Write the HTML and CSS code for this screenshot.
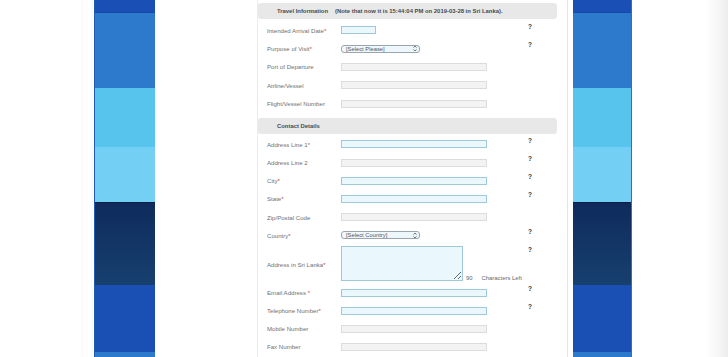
FILE: index.html
```html
<!DOCTYPE html>
<html lang="en">
<head>
<meta charset="utf-8">
<title>Travel Information</title>
<link rel="stylesheet" href="styles.css">
</head>
<body>
<div class="page">
  <div class="gutter-left"></div>
  <div class="stripe stripe-left">
    <div class="band b1"></div><div class="band b2"></div><div class="band b3"></div><div class="band b4"></div><div class="band b5"></div><div class="band b6"></div><div class="band b7"></div>
  </div>
  <div class="gap-mid"></div>
  <main class="panel">
    <section class="section">
      <div class="section-head"><span class="title">Travel Information</span><span class="note">(Note that now it is 15:44:04 PM on 2019-03-28 in Sri Lanka).</span></div>
      <div class="row"><label class="lbl">Intended Arrival Date<span class="req">*</span></label><div class="field"><input class="inp need w-date" type="text"></div><span class="help">?</span></div>
      <div class="row"><label class="lbl">Purpose of Visit<span class="req">*</span></label><div class="field"><div class="sel w-sel1"><span>[Select Please]</span><svg class="arr" viewBox="0 0 4 7" width="4" height="7"><path d="M0.5 2.6 L2 1 L3.5 2.6 M0.5 4.4 L2 6 L3.5 4.4" fill="none" stroke="#555" stroke-width="0.8"/></svg></div></div><span class="help">?</span></div>
      <div class="row"><label class="lbl">Port of Departure</label><div class="field"><input class="inp opt w-full" type="text"></div><span class="help"></span></div>
      <div class="row"><label class="lbl">Airline/Vessel</label><div class="field"><input class="inp opt w-full" type="text"></div><span class="help"></span></div>
      <div class="row"><label class="lbl">Flight/Vessel Number</label><div class="field"><input class="inp opt w-full" type="text"></div><span class="help"></span></div>
    </section>
    <section class="section">
      <div class="section-head"><span class="title">Contact Details</span></div>
      <div class="row"><label class="lbl">Address Line 1<span class="req">*</span></label><div class="field"><input class="inp need w-full" type="text"></div><span class="help">?</span></div>
      <div class="row"><label class="lbl">Address Line 2</label><div class="field"><input class="inp opt w-full" type="text"></div><span class="help">?</span></div>
      <div class="row"><label class="lbl">City<span class="req">*</span></label><div class="field"><input class="inp need w-full" type="text"></div><span class="help">?</span></div>
      <div class="row"><label class="lbl">State<span class="req">*</span></label><div class="field"><input class="inp need w-full" type="text"></div><span class="help">?</span></div>
      <div class="row"><label class="lbl">Zip/Postal Code</label><div class="field"><input class="inp opt w-full" type="text"></div><span class="help"></span></div>
      <div class="row"><label class="lbl">Country<span class="req">*</span></label><div class="field"><div class="sel w-sel1"><span>[Select Country]</span><svg class="arr" viewBox="0 0 4 7" width="4" height="7"><path d="M0.5 2.6 L2 1 L3.5 2.6 M0.5 4.4 L2 6 L3.5 4.4" fill="none" stroke="#555" stroke-width="0.8"/></svg></div></div><span class="help">?</span></div>
      <div class="row row-tall"><label class="lbl">Address in Sri Lanka<span class="req">*</span></label><div class="field field-ta"><textarea class="ta"></textarea><span class="count">90</span><span class="left">Characters Left</span></div><span class="help">?</span></div>
      <div class="row"><label class="lbl">Email Address <span class="req">*</span></label><div class="field"><input class="inp need w-full" type="text"></div><span class="help">?</span></div>
      <div class="row"><label class="lbl">Telephone Number<span class="req">*</span></label><div class="field"><input class="inp need w-full" type="text"></div><span class="help">?</span></div>
      <div class="row"><label class="lbl">Mobile Number</label><div class="field"><input class="inp opt w-full" type="text"></div><span class="help"></span></div>
      <div class="row"><label class="lbl">Fax Number</label><div class="field"><input class="inp opt w-full" type="text"></div><span class="help"></span></div>
    </section>
  </main>
  <div class="gap-right"></div>
  <div class="stripe stripe-right">
    <div class="band b1"></div><div class="band b2"></div><div class="band b3"></div><div class="band b4"></div><div class="band b5"></div><div class="band b6"></div><div class="band b7"></div>
  </div>
  <div class="gutter-right"></div>
</div>
</body>
</html>
```
FILE: styles.css
```css
* { box-sizing: border-box; }
html, body { margin: 0; padding: 0; background: #fff; }
body { font-family: "Liberation Sans", Arial, sans-serif; color: #666; }

.page { display: flex; height: 357px; overflow: hidden; }

.gutter-left { width: 94px; flex: none; background: linear-gradient(to right, #fff 0, #fff 80px, #fafafa 82px, #fff 84px, #fff 91px, #f6f6f6 92px, #fff 93px); }
.gap-mid { width: 102px; flex: none; }
.gap-right { width: 5px; flex: none; }
.gutter-right { flex: 1; background: linear-gradient(to right, #fff 0, #fff 73px, #f7f7f7 86px, #ececec 96px); }

.stripe { flex: none; display: flex; flex-direction: column; }
.stripe-left { width: 61px; border-left: 1px solid #1d5cb0; }
.stripe-right { width: 59px; border-right: 1px solid #2a6fd0; }
.band { flex: none; }
.b1 { height: 13px; background: #1a4fb5; border-bottom: 1px solid #1848a8; }
.b2 { height: 75px; background: #2d79cc; }
.b3 { height: 59px; background: #56c4ec; }
.b4 { height: 55px; background: #73cff3; }
.b5 { height: 83px; background: linear-gradient(#0e2b5c, #17406f); border-top: 1px solid #0a1d48; }
.b6 { height: 67px; background: #1a50b3; }
.b7 { flex: 1; background: #2d79cc; }

.panel { width: 311px; flex: none; border-left: 1px solid #ececec; border-right: 1px solid #e6e6e6; padding: 3px 0 0 0; }

.section + .section { margin-top: 5px; }
.section-head { width: 299px; height: 16px; background: #e8e8e8; border-radius: 3px; display: flex; align-items: center; padding-left: 19px; font-size: 5.9px; font-weight: bold; color: #4a4a4a; margin-bottom: 2px; }
.section-head .title { width: 58px; flex: none; }
.section + .section .section-head { margin-bottom: 1.5px; }

.row { display: flex; align-items: center; height: 18.35px; padding-left: 9px; }
.section + .section .row { height: 18.2px; }
.section + .section .row-tall { height: 39.6px; }
.section + .section .row-tall ~ .row { height: 18px; }
.lbl { width: 74px; flex: none; font-size: 6.1px; color: #707070; white-space: nowrap; }
.req { color: #d04040; }
.field { width: 187px; flex: none; display: flex; align-items: center; }
.help { align-self: flex-start; margin-top: 1.5px; font-size: 6.5px; line-height: 7px; font-weight: bold; color: #333; }

.inp { display: block; height: 8px; margin: 0; padding: 0; font: inherit; outline: none; border-radius: 0; }
.need { background: #eaf8fd; border: 1px solid #9ec8dc; }
.opt { background: #f3f3f3; border: 1px solid #dcdcdc; }
.w-date { width: 35px; }
.w-full { width: 146px; }

.sel { display: flex; align-items: center; justify-content: space-between; height: 8px; background: #eef8fc; border: 1px solid #9aa5ad; border-radius: 3px; padding: 0 2px 0 4px; font-size: 5.8px; color: #555; }
.w-sel1 { width: 79px; }
.arr { display: block; }

.field-ta { align-self: stretch; align-items: flex-end; padding-top: 1.5px; padding-bottom: 2.5px; }
.ta { display: block; width: 122px; height: 35px; margin: 0; padding: 0; background: #eaf8fd; border: 1px solid #9ec8dc; border-radius: 0; outline: none; resize: both; font: inherit; }
.count { font-size: 5.9px; color: #666; margin-left: 3px; line-height: 7px; margin-bottom: -1px; }
.left { font-size: 5.9px; color: #666; margin-left: 9px; line-height: 7px; margin-bottom: -1px; }
```
